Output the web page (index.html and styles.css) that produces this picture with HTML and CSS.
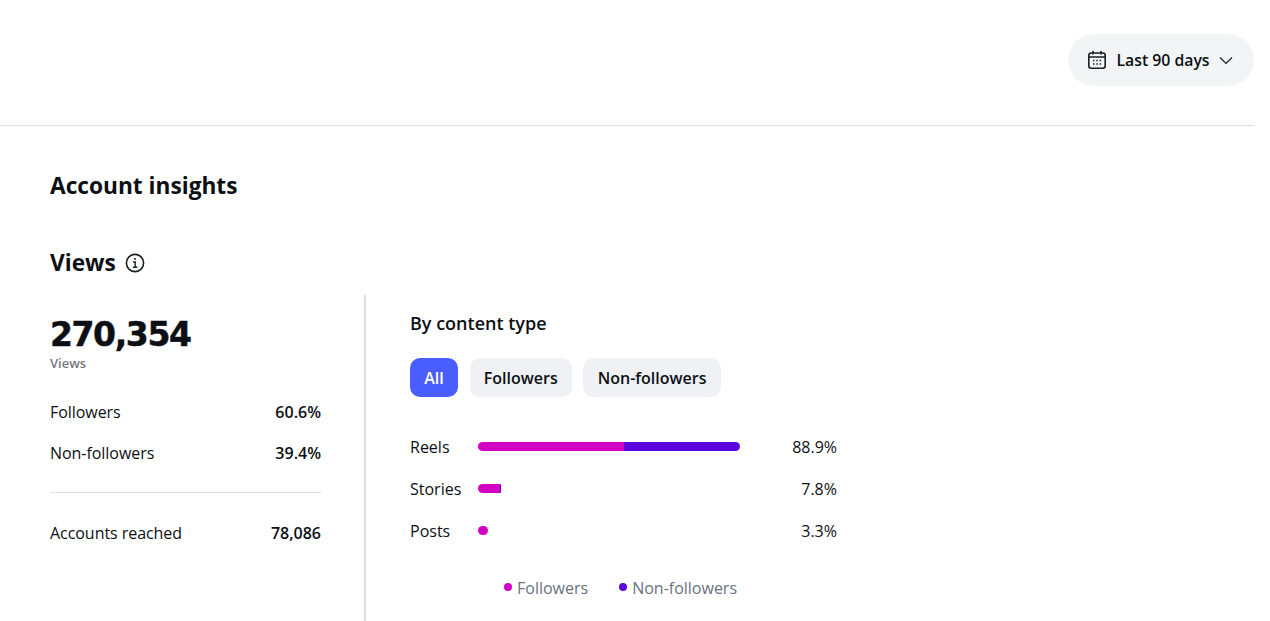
FILE: index.html
```html
<!DOCTYPE html>
<html lang="en">
<head>
  <meta charset="UTF-8" />
  <title>Account insights</title>
  <meta name="viewport" content="width=device-width, initial-scale=1.0" />
  <link rel="stylesheet" href="styles.css">
</head>
<body>

<div class="page">
  <!-- Top bar -->
  <div class="topbar">
    <button class="range">
      <svg width="20" height="20" viewBox="0 0 20 20" fill="none" stroke="#1c1e21" stroke-width="1.6">
        <rect x="1.800" y="3" width="16.400" height="15.200" rx="2.500" />
        <path d="M2 7h16M6 1v3.500M14 1v3.500" />
        <path d="M6 10.500h1.500M9.300 10.500h1.500M12.600 10.500h1.500M6 14h1.500M9.300 14h1.500M12.600 14h1.500" stroke-width="1.500" />
      </svg>
      <span>Last 90 days</span>
      <svg width="14" height="14" viewBox="0 0 14 14" fill="none" stroke="#1c1e21" stroke-width="1.200">
        <path d="M1 4.500L7 10.500l6-6" />
      </svg>
    </button>
  </div>

  <div class="content">
    <h2 class="title">Account insights</h2>

    <div class="views-head">
      <h3>Views</h3>
      <svg width="20" height="20" viewBox="0 0 20 20" fill="none" stroke="#1c1e21" stroke-width="1.600">
        <circle cx="10" cy="10" r="8.600" />
        <path d="M8 9h2.200v5M8 14.200h4.400" stroke-width="1.400" />
        <circle cx="10" cy="6" r="1" fill="#1c1e21" stroke="none" />
      </svg>
    </div>

    <div class="columns">
      <!-- Totals -->
      <div class="totals">
        <div class="big">270,354</div>
        <div class="big-label">Views</div>
        <div class="stat first"><span>Followers</span><b>60.6%</b></div>
        <div class="stat"><span>Non-followers</span><b>39.4%</b></div>
        <hr />
        <div class="stat"><span>Accounts reached</span><b>78,086</b></div>
      </div>

      <!-- Breakdown -->
      <div class="breakdown">
        <h4>By content type</h4>
        <div class="tabs">
          <button class="tab active">All</button>
          <button class="tab">Followers</button>
          <button class="tab">Non-followers</button>
        </div>

        <div class="chart">
          <div class="row">
            <span class="name">Reels</span>
            <div class="track">
              <div class="bar" style="width:262px">
                <i class="fol" style="width:146px"></i><i class="non" style="width:116px"></i>
              </div>
            </div>
            <span class="pct">88.9%</span>
          </div>
          <div class="row">
            <span class="name">Stories</span>
            <div class="track">
              <div class="bar" style="width:23px">
                <i class="fol" style="width:22px"></i><i class="non" style="width:1px"></i>
              </div>
            </div>
            <span class="pct">7.8%</span>
          </div>
          <div class="row">
            <span class="name">Posts</span>
            <div class="track">
              <div class="bar" style="width:10px">
                <i class="fol" style="width:10px"></i>
              </div>
            </div>
            <span class="pct">3.3%</span>
          </div>
        </div>

        <div class="legend">
          <span><i class="dot fol"></i>Followers</span>
          <span><i class="dot non"></i>Non-followers</span>
        </div>
      </div>
    </div>
  </div>
</div>

</body>
</html>
```

FILE: styles.css
```css
html, body { height: 100%; }
body {
  margin: 0; background: #fff; color: #0c1014;
  font-family: "Open Sans", "Noto Sans", sans-serif;
  overflow: hidden;
}
.page { width: 1254px; }

.topbar {
  height: 126px; box-sizing: border-box;
  border-bottom: 1px solid #dbdee3;
  display: flex; justify-content: flex-end; align-items: flex-start;
  padding-top: 34px;
}
.range {
  height: 52px; width: 186px; border: 0; border-radius: 26px;
  background: #f3f4f6; color: #0c1014;
  display: flex; align-items: center; justify-content: center; gap: 9px;
  font: 600 15.800px "Open Sans", sans-serif;
  padding: 0 2px 0 0;
}

.content { padding: 45px 0 0 50px; }
.title { margin: 0; font-size: 22.700px; line-height: 30px; font-weight: 700; }
.views-head {
  display: flex; align-items: center; gap: 9px;
  margin-top: 47px; height: 30px;
}
.views-head h3 { margin: 0; font-size: 22.700px; line-height: 30px; font-weight: 700; }

.columns { display: flex; margin-top: 17px; height: 326px; }
.totals {
  width: 271px; padding-right: 43px; padding-top: 17px;
  border-right: 2px solid #dbdee3;
}
.big {
  font: 700 33px/46px "DejaVu Sans", sans-serif;
  letter-spacing: -1.400px;
  -webkit-text-stroke: 0.500px #0c1014;
}
.big-label { font-size: 13px; line-height: 18px; font-weight: 600; color: #737780; margin-top: -4px; }
.stat {
  display: flex; justify-content: space-between; align-items: center;
  font-size: 16px; line-height: 24px; margin-bottom: 17px;
}
.stat b { font-weight: 600; }
.stat.first { margin-top: 28px; }
.stat span { letter-spacing: -0.050px; }
.totals hr { border: 0; border-top: 1px solid #dbdee3; margin: 27px 0 28px; }

.breakdown { padding: 15px 0 0 44px; }
.breakdown h4 { margin: 0; font-size: 18px; line-height: 26px; font-weight: 600; }
.tabs { display: flex; gap: 11.500px; margin-top: 22px; }
.tab {
  height: 39px; border: 0; border-radius: 10px; padding: 0 14.250px;
  background: #f0f1f5; color: #0c1014;
  font: 600 16px "Open Sans", sans-serif;
}
.tab.active { background: #4a5dff; color: #fff; }

.chart { margin-top: 29px; width: 427px; }
.row { display: flex; align-items: center; height: 42px; font-size: 16px; }
.name { width: 68px; }
.track { flex: 1; }
.pct { text-align: right; }
.bar { display: flex; height: 9px; margin-top: -2px; }
.bar i { display: block; height: 100%; }
.bar i:first-child { border-radius: 5px 0 0 5px; }
.bar i:last-child { border-radius: 0 5px 5px 0; }
.bar i:only-child { border-radius: 5px; }
.fol { background: #d100c4; }
.non { background: #5b07dd; }

.legend {
  display: flex; gap: 31px; margin: 24px 0 0 94px;
  font-size: 16px; line-height: 24px; color: #6b7280;
}
.legend span { display: flex; align-items: center; }
.dot { width: 8px; height: 8px; border-radius: 50%; margin-right: 5px; margin-top: -2px; }
```
